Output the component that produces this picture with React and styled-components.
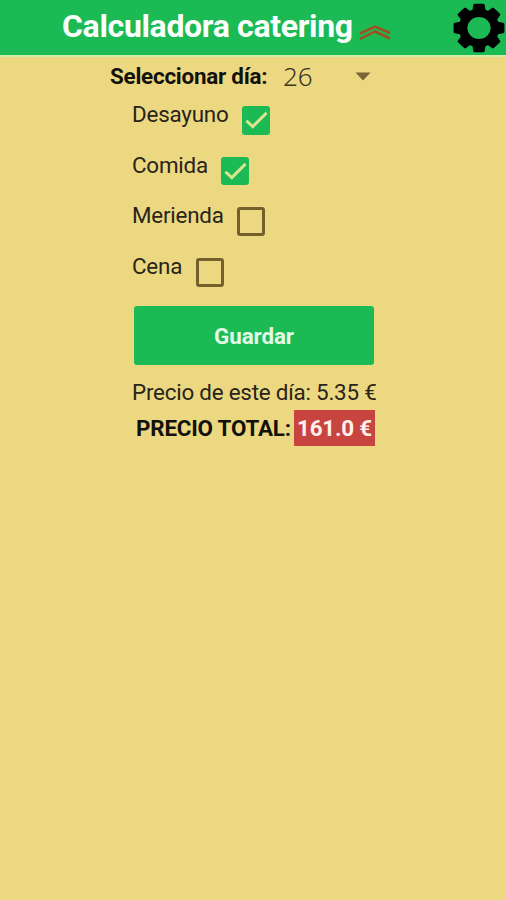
import React from "react";
import styled, { createGlobalStyle } from "styled-components";

const meals = [
  { name: "Desayuno", checked: true, width: 96 },
  { name: "Comida", checked: true, width: 75 },
  { name: "Merienda", checked: false, width: 91 },
  { name: "Cena", checked: false, width: 50 },
];

export default function App() {
  return (
    <Screen>
      <GlobalStyle />
      <Header>
        <Title>Calculadora catering</Title>
        <Chevrons viewBox="0 0 32 18">
          <path d="M1 9.5 L16 2.5 L31 9 M1 15 L16 7.5 L31 14.5" />
        </Chevrons>
        <Gear viewBox="-26 -25 52 50">
          <g transform="scale(1 0.95)">
            <path
              fillRule="evenodd"
              d="M0 -20.3 A20.3 20.3 0 1 1 0 20.3 A20.3 20.3 0 1 1 0 -20.3 Z M0 -11.6 A11.6 11.6 0 1 0 0 11.6 A11.6 11.6 0 1 0 0 -11.6 Z"
            />
            {[0, 45, 90, 135, 180, 225, 270, 315].map((angle) => (
              <path
                key={angle}
                transform={`rotate(${angle})`}
                d="M-6.6 -18.5 L-5.6 -24.4 Q-5.3 -25.4 -4.3 -25.4 L4.3 -25.4 Q5.3 -25.4 5.6 -24.4 L6.6 -18.5 Z"
              />
            ))}
          </g>
        </Gear>
      </Header>

      <DayRow>
        <DayLabel>Seleccionar día:</DayLabel>
        <DayValue>26</DayValue>
        <Caret viewBox="0 0 16 9">
          <path d="M0.5 0.5 H15.5 L8 8.5 Z" />
        </Caret>
      </DayRow>

      <Meals>
        {meals.map((meal) => (
          <MealRow key={meal.name}>
            <MealLabel $width={meal.width}>{meal.name}</MealLabel>
            <Checkbox $checked={meal.checked}>
              {meal.checked && (
                <svg viewBox="0 0 29 29">
                  <path d="M4.5 15 L11 21 L25 7" />
                </svg>
              )}
            </Checkbox>
          </MealRow>
        ))}
      </Meals>

      <SaveButton>Guardar</SaveButton>

      <DayPrice>Precio de este día: 5.35 €</DayPrice>
      <TotalRow>
        <TotalLabel>PRECIO TOTAL:</TotalLabel>
        <TotalValue>161.0 €</TotalValue>
      </TotalRow>
    </Screen>
  );
}

const GlobalStyle = createGlobalStyle`
  * {
    box-sizing: border-box;
  }

  body {
    margin: 0;
    background-color: #edd882;
    font-family: Roboto, sans-serif;
  }
`;

const Screen = styled.div`
  width: 506px;
  height: 900px;
  overflow: hidden;
  color: #12110b;
  background-color: #edd882;
  white-space: nowrap;
`;

const Header = styled.div`
  display: flex;
  align-items: flex-start;
  height: 57px;
  padding-left: 62px;
  background-color: #1cba54;
  border-bottom: 2px solid #d3eda6;
`;

const Title = styled.div`
  width: 297px;
  font-size: 32px;
  font-weight: bold;
  line-height: 52px;
  letter-spacing: -0.33px;
  color: #fbfffb;
`;

const Chevrons = styled.svg`
  width: 32px;
  height: 18px;
  margin-top: 24px;
  fill: none;
  stroke: #a05020;
  stroke-width: 2.5;
`;

const Gear = styled.svg`
  width: 52px;
  height: 50px;
  margin: 3px 0 0 62px;
  fill: #000;
`;

const DayRow = styled.div`
  display: flex;
  align-items: center;
  height: 38px;
  padding-left: 110px;
`;

const DayLabel = styled.div`
  width: 173px;
  font-size: 22.4px;
  font-weight: bold;
  letter-spacing: -0.23px;
`;

const DayValue = styled.div`
  width: 72px;
  font-family: "Noto Sans", sans-serif;
  font-size: 26px;
  font-weight: 300;
  color: #39331f;
`;

const Caret = styled.svg`
  width: 16px;
  height: 9px;
  margin-top: 1px;
  fill: #7a6336;
`;

const Meals = styled.div`
  display: grid;
  grid-auto-rows: 50.7px;
  height: 211px;
  padding: 6px 0 0 132px;
`;

const MealRow = styled.div`
  display: flex;
  align-items: flex-start;
`;

const MealLabel = styled.div`
  width: ${(props) => props.$width}px;
  font-size: 22.4px;
  line-height: 26px;
  letter-spacing: -0.22px;
  color: #28241a;
`;

const Checkbox = styled.div`
  width: 28.5px;
  height: 28.5px;
  margin: 5px 0 0 13.5px;
  border: ${(props) => (props.$checked ? "none" : "3px solid #74602b")};
  border-radius: 3px;
  background-color: ${(props) => (props.$checked ? "#1cba54" : "transparent")};

  svg {
    display: block;
    fill: none;
    stroke: #dce391;
    stroke-width: 3;
  }
`;

const SaveButton = styled.button`
  display: block;
  width: 240px;
  height: 59px;
  margin-left: 134px;
  padding: 0;
  border: none;
  border-radius: 3px;
  font-family: inherit;
  font-size: 22.4px;
  font-weight: bold;
  letter-spacing: -0.1px;
  color: #e2fae5;
  background-color: #1cba54;
`;

const DayPrice = styled.div`
  height: 45px;
  padding: 14px 0 0 132px;
  font-size: 22.4px;
  line-height: 26px;
  letter-spacing: -0.22px;
  color: #28241a;
`;

const TotalRow = styled.div`
  display: flex;
  padding-left: 136px;
  font-size: 22.4px;
  font-weight: bold;
  line-height: 36px;
  letter-spacing: -0.2px;
`;

const TotalLabel = styled.div`
  width: 158px;
`;

const TotalValue = styled.div`
  width: 81px;
  text-align: center;
  color: #fff0ec;
  background-color: #c8443f;
`;
